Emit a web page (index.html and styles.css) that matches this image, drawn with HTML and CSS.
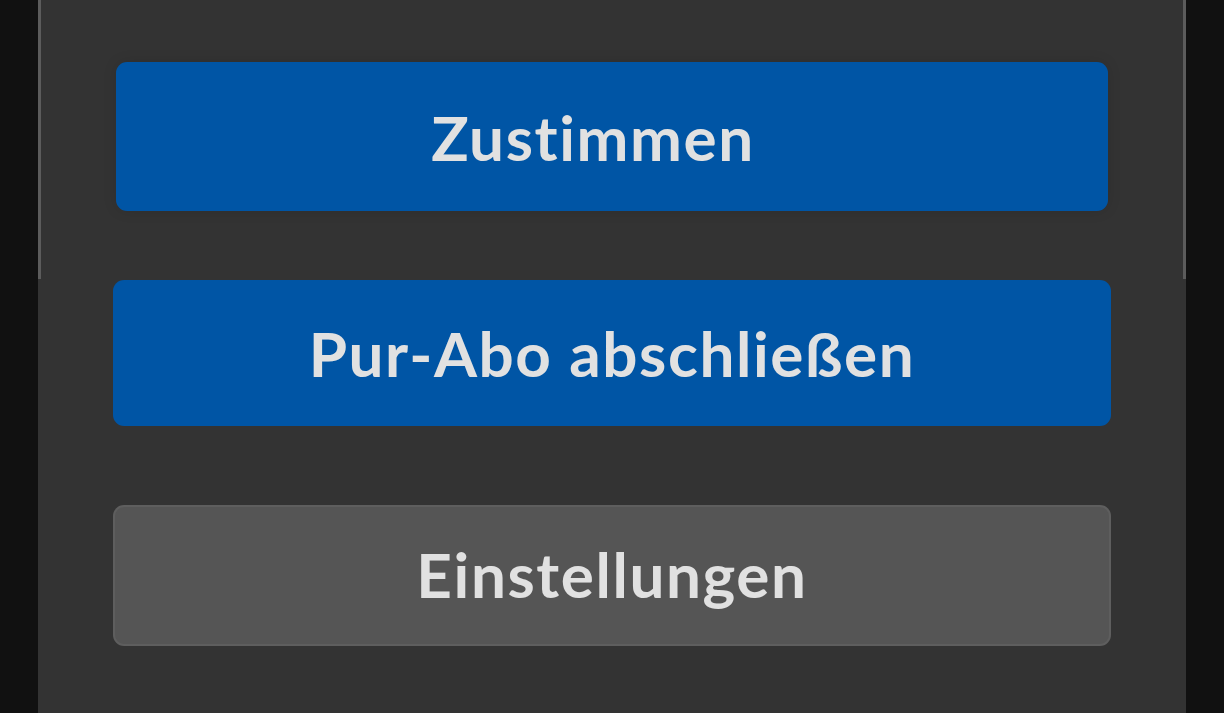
FILE: index.html
```html
<!DOCTYPE html>
<html lang="de">
<head>
    <meta charset="UTF-8">
    <meta name="viewport" content="width=device-width, initial-scale=1.0">
    <title>Einwilligung</title>
    <link rel="stylesheet" href="styles.css">
</head>
<body>
    <div class="consent-panel">
        <div class="button-list">
            <button type="button" class="btn btn-primary btn-accept">Zustimmen</button>
            <button type="button" class="btn btn-primary btn-abo">Pur-Abo abschließen</button>
            <button type="button" class="btn btn-secondary">Einstellungen</button>
        </div>
    </div>
</body>
</html>
```

FILE: styles.css
```css
* {
    margin: 0;
    padding: 0;
    box-sizing: border-box;
    font-family: 'Lato', 'Noto Sans', sans-serif;
}

:root {
    --bg-dark: #111111;
    --panel-bg: #333333;
    --blue: #0055a5;
    --grey-btn: #555555;
    --text-light: #e1e1e1;
}

body {
    background: var(--bg-dark);
    height: 100vh;
    overflow: hidden;
}

/* Panel */
.consent-panel {
    position: relative;
    margin-left: 38px;
    width: 1148px;
    height: 100%;
    background: var(--panel-bg);
}

/* scroll frame lines at the top */
.consent-panel::before,
.consent-panel::after {
    content: '';
    position: absolute;
    top: 0;
    width: 3px;
    height: 279px;
    background: #5c5c5c;
}

.consent-panel::before {
    left: 0;
}

.consent-panel::after {
    right: 0;
}

.button-list {
    display: flex;
    flex-direction: column;
    padding: 62px 75px 0;
}

/* Buttons */
.btn {
    width: 998px;
    border: none;
    border-radius: 11px;
    color: var(--text-light);
    font-size: 62px;
    font-weight: 700;
    letter-spacing: 1.6px;
    font-variant-ligatures: none;
    line-height: 1;
    text-align: center;
    cursor: pointer;
}

.btn-primary {
    background: var(--blue);
}

.btn-accept {
    width: 992px;
    height: 149px;
    margin-left: 3px;
    padding-right: 38px;
    box-shadow: 0 0 14px rgba(0, 0, 0, 0.12);
}

.btn-abo {
    height: 146px;
    margin-top: 69px;
}

.btn-secondary {
    height: 141px;
    margin-top: 79px;
    padding-bottom: 3px;
    background: var(--grey-btn);
    border: 2px solid #5e5e5e;
}
```
